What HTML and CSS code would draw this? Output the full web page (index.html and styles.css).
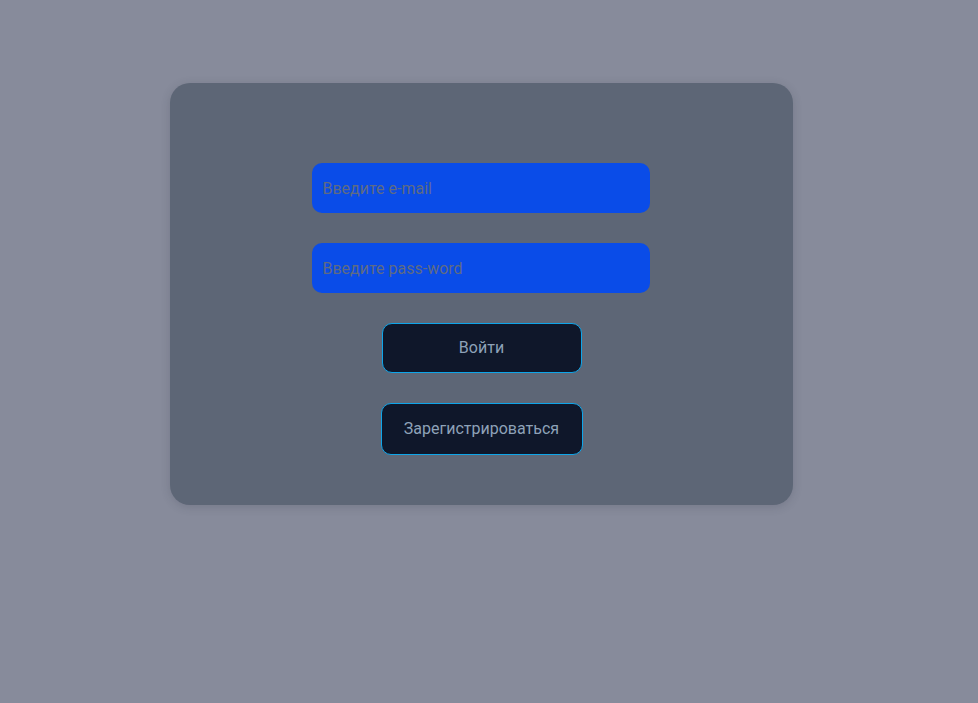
FILE: index.html
```html
<!DOCTYPE html>
<html lang="ru">
<head>
<meta charset="utf-8">
<title>Вход</title>
<link rel="stylesheet" href="styles.css">
</head>
<body>
<div class="page">
  <form class="card">
    <input class="field" type="email" placeholder="Введите e-mail">
    <input class="field" type="password" placeholder="Введите pass-word">
    <button class="btn btn-login" type="button">Войти</button>
    <button class="btn btn-register" type="button">Зарегистрироваться</button>
  </form>
</div>
</body>
</html>
```
FILE: styles.css
```css
html, body {
  margin: 0;
  height: 100%;
  background: #878b9b;
  font-family: Roboto, "Liberation Sans", sans-serif;
}
.page {
  display: flex;
  justify-content: center;
  align-items: flex-start;
  padding: 83px 15px 0 0;
}
.card {
  width: 623px;
  box-sizing: border-box;
  padding: 80px 0 50px;
  background: #5d6676;
  border-radius: 20px;
  box-shadow: 0 2px 10px rgba(40, 45, 60, 0.18);
  display: flex;
  flex-direction: column;
  align-items: center;
  gap: 30px;
}
.field {
  width: 338px;
  height: 50px;
  margin-right: 2px;
  box-sizing: border-box;
  border: none;
  outline: none;
  border-radius: 10px;
  background: #0a4ce8;
  padding: 0 11px;
  font-family: inherit;
  font-size: 16px;
  color: #c8d0e0;
}
.field::placeholder {
  color: #5f6b82;
  opacity: 1;
}
.btn {
  box-sizing: border-box;
  background: #0f172a;
  border: 1px solid #0ea5e9;
  border-radius: 10px;
  color: #8ea2b8;
  font-family: inherit;
  font-size: 16px;
  padding: 0 0 2px;
  cursor: pointer;
}
.btn-login {
  width: 200px;
  height: 50px;
}
.btn-register {
  width: 202px;
  height: 52px;
}
```
